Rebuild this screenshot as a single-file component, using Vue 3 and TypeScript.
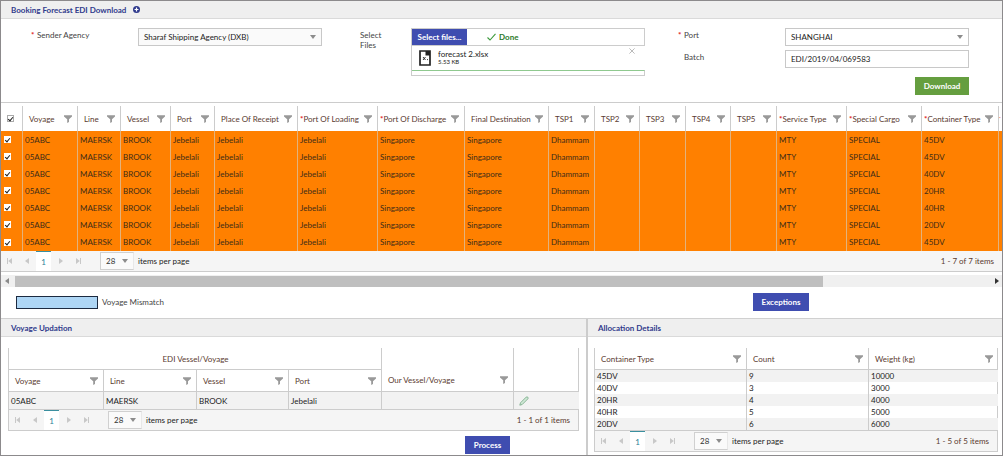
<script setup lang="ts">
import { defineComponent, h, ref } from 'vue'

interface Column {
  title: string
  width: number
  key?: string
  required?: boolean
}

const FilterIcon = defineComponent({
  setup: () => () =>
    h('svg', { viewBox: '0 0 8 8', width: 8, height: 8, 'aria-hidden': 'true' }, [
      h('path', { d: 'M0 0.2H8V1.4L5 4.2V7L3.2 8V4.2L0 1.4Z', fill: '#999' }),
    ]),
})

const Pager = defineComponent({
  props: { total: { type: Number, required: true }, name: { type: String, required: true } },
  setup: (props) => {
    const nav = (label: string, d: string) =>
      h('button', { class: 'nav', type: 'button', 'aria-label': label }, [
        h('svg', { viewBox: '0 0 6 6', width: 6, height: 6 }, [h('path', { d, fill: '#c8c8c8' })]),
      ])
    return () =>
      h('div', { class: 'pager' }, [
        nav('First page', 'M0 0H1V6H0ZM5 0V6L1.2 3Z'),
        nav('Previous page', 'M5 0V6L1 3Z'),
        h('button', { class: 'nav current', type: 'button' }, '1'),
        nav('Next page', 'M1 0V6L5 3Z'),
        nav('Last page', 'M5 0H6V6H5ZM1 0V6L4.8 3Z'),
        h('label', { class: 'size' }, [
          h('span', { class: 'size-box' }, [
            h('select', { name: props.name }, [h('option', '28')]),
            h('svg', { viewBox: '0 0 6 4', width: 6, height: 4 }, [h('path', { d: 'M0 0H6L3 4Z', fill: '#8c8c8c' })]),
          ]),
          'items per page',
        ]),
        h('span', { class: 'count' }, `1 - ${props.total} of ${props.total} items`),
      ])
  },
})

const bookingColumns: Column[] = [
  { title: 'Voyage', width: 55, key: 'voyage' },
  { title: 'Line', width: 43, key: 'line' },
  { title: 'Vessel', width: 50, key: 'vessel' },
  { title: 'Port', width: 44, key: 'port' },
  { title: 'Place Of Receipt', width: 83, key: 'port' },
  { title: 'Port Of Loading', width: 80, key: 'port', required: true },
  { title: 'Port Of Discharge', width: 87, key: 'destination', required: true },
  { title: 'Final Destination', width: 84, key: 'destination' },
  { title: 'TSP1', width: 46, key: 'tsp1' },
  { title: 'TSP2', width: 45 },
  { title: 'TSP3', width: 46 },
  { title: 'TSP4', width: 45 },
  { title: 'TSP5', width: 46 },
  { title: 'Service Type', width: 70, key: 'service', required: true },
  { title: 'Special Cargo', width: 75, key: 'cargo', required: true },
  { title: 'Container Type', width: 77, key: 'container', required: true },
]

const containers = ['45DV', '45DV', '40DV', '20HR', '40HR', '20DV', '45DV']
const bookings = ref(
  containers.map((container) => ({
    selected: true,
    cells: {
      voyage: '05ABC',
      line: 'MAERSK',
      vessel: 'BROOK',
      port: 'Jebelali',
      destination: 'Singapore',
      tsp1: 'Dhammam',
      service: 'MTY',
      cargo: 'SPECIAL',
      container,
    } as Record<string, string>,
  })),
)
const allSelected = ref(true)
const toggleAll = () => bookings.value.forEach((b) => (b.selected = allSelected.value))

const voyageColumns = ['Voyage', 'Line', 'Vessel', 'Port']
const allocations = [
  ['45DV', '9', '10000'],
  ['40DV', '3', '3000'],
  ['20HR', '4', '4000'],
  ['40HR', '5', '5000'],
  ['20DV', '6', '6000'],
]
const batch = ref('EDI/2019/04/069583')
</script>

<template>
  <main class="page">
    <h1 class="bar">
      Booking Forecast EDI Download
      <svg viewBox="0 0 8 8" width="7" height="7" aria-hidden="true">
        <circle cx="4" cy="4" r="4" fill="#2f3a8c" />
        <path d="M4 1.8V6.2M1.8 4H6.2" stroke="#fff" stroke-width="1.4" />
      </svg>
    </h1>

    <form class="form" @submit.prevent>
      <label class="label sender" for="agency"><i class="req">*</i>Sender Agency</label>
      <div class="drop agency">
        <select id="agency"><option>Sharaf Shipping Agency (DXB)</option></select>
        <svg viewBox="0 0 6 4" width="6" height="4"><path d="M0 0H6L3 4Z" fill="#8c8c8c" /></svg>
      </div>

      <span class="label files">Select Files</span>
      <div class="upload">
        <div class="upload-top">
          <button type="button" class="btn pick">Select files...</button>
          <span class="done">
            <svg viewBox="0 0 9 8" width="9" height="8"><path d="M0.5 4.5L3 7L8.5 0.8" fill="none" stroke="#3c9a3c" stroke-width="1.1" /></svg>
            Done
          </span>
        </div>
        <div class="file">
          <svg viewBox="0 0 12 16" width="12" height="16">
            <path d="M1 1H11V15H1Z" fill="#fff" stroke="#222" stroke-width="1.7" />
            <path d="M6.5 1H11V5.5H6.5Z" fill="#222" />
            <path d="M4 7L6.5 10M6.5 7L4 10M8 9.6H9" stroke="#222" stroke-width="0.9" />
          </svg>
          <div class="file-text">
            <span>forecast 2.xlsx</span>
            <small>5.53 KB</small>
          </div>
          <button type="button" class="remove" aria-label="Remove file">
            <svg viewBox="0 0 6 6" width="6" height="6"><path d="M0.4 0.4L5.6 5.6M5.6 0.4L0.4 5.6" stroke="#bbb" /></svg>
          </button>
        </div>
        <div class="progress"></div>
      </div>

      <label class="label port-label" for="port"><i class="req">*</i>Port</label>
      <div class="drop plain port">
        <select id="port"><option>SHANGHAI</option></select>
        <svg viewBox="0 0 6 4" width="6" height="4"><path d="M0 0H6L3 4Z" fill="#8c8c8c" /></svg>
      </div>
      <label class="label batch-label" for="batch">Batch</label>
      <input id="batch" v-model="batch" class="batch" type="text" />
      <button type="button" class="btn green download">Download</button>
    </form>

    <section class="bookings">
      <table class="grid booking">
        <colgroup>
          <col :style="{ width: '21px' }" />
          <col v-for="c in bookingColumns" :key="c.title" :style="{ width: c.width + 'px' }" />
          <col :style="{ width: '4px' }" />
        </colgroup>
        <thead>
          <tr>
            <th class="tick"><input v-model="allSelected" type="checkbox" aria-label="Select all" @change="toggleAll" /></th>
            <th v-for="c in bookingColumns" :key="c.title" :class="{ must: c.required }">
              <div class="head"><span><i v-if="c.required" class="req">*</i>{{ c.title }}</span><FilterIcon /></div>
            </th>
            <th class="edge"><i class="req">*</i></th>
          </tr>
        </thead>
        <tbody>
          <tr v-for="(b, i) in bookings" :key="i">
            <td class="tick"><input v-model="b.selected" type="checkbox" :aria-label="'Select row ' + (i + 1)" /></td>
            <td v-for="c in bookingColumns" :key="c.title">{{ c.key ? b.cells[c.key] : '' }}</td>
            <td></td>
          </tr>
        </tbody>
      </table>
      <Pager :total="7" name="booking-size" />
      <div class="scroll">
        <svg viewBox="0 0 4 6" width="4" height="6"><path d="M4 0V6L0 3Z" fill="#8a8a8a" /></svg>
        <div class="track"><div class="thumb"></div></div>
        <svg viewBox="0 0 4 6" width="4" height="6"><path d="M0 0V6L4 3Z" fill="#333" /></svg>
      </div>
    </section>

    <div class="legend">
      <span class="swatch"></span>
      <span>Voyage Mismatch</span>
      <button type="button" class="btn exceptions">Exceptions</button>
    </div>

    <div class="panels">
      <section class="panel">
        <h2 class="bar">Voyage Updation</h2>
        <div class="panel-body left">
          <div class="frame">
            <table class="grid voyage">
              <colgroup>
                <col v-for="(w, i) in [94, 93, 92, 93, 132, 66]" :key="i" :style="{ width: w + 'px' }" />
              </colgroup>
              <thead>
                <tr>
                  <th colspan="4" class="group">EDI Vessel/Voyage</th>
                  <th rowspan="2" class="low"><div class="head"><span>Our Vessel/Voyage</span><FilterIcon /></div></th>
                  <th rowspan="2"></th>
                </tr>
                <tr>
                  <th v-for="c in voyageColumns" :key="c"><div class="head"><span>{{ c }}</span><FilterIcon /></div></th>
                </tr>
              </thead>
              <tbody>
                <tr>
                  <td>05ABC</td>
                  <td>MAERSK</td>
                  <td>BROOK</td>
                  <td>Jebelali</td>
                  <td></td>
                  <td>
                    <button type="button" class="edit" aria-label="Edit">
                      <svg viewBox="0 0 10 10" width="10" height="10">
                        <path d="M0.8 9.2L1.5 6.8L7.2 1.1Q8 0.5 8.8 1.2Q9.5 2 8.9 2.8L3.2 8.5Z" fill="#cfe8d6" stroke="#7fae8c" stroke-width="0.9" />
                      </svg>
                    </button>
                  </td>
                </tr>
              </tbody>
            </table>
            <Pager :total="1" name="voyage-size" />
          </div>
          <button type="button" class="btn process">Process</button>
        </div>
      </section>

      <section class="panel">
        <h2 class="bar">Allocation Details</h2>
        <div class="panel-body right">
          <div class="frame">
            <table class="grid alloc">
              <colgroup>
                <col v-for="(w, i) in [151, 122, 130]" :key="i" :style="{ width: w + 'px' }" />
              </colgroup>
              <thead>
                <tr>
                  <th v-for="c in ['Container Type', 'Count', 'Weight (kg)']" :key="c">
                    <div class="head"><span>{{ c }}</span><FilterIcon /></div>
                  </th>
                </tr>
              </thead>
              <tbody>
                <tr v-for="a in allocations" :key="a[0]">
                  <td v-for="v in a" :key="v">{{ v }}</td>
                </tr>
              </tbody>
            </table>
            <Pager :total="5" name="allocation-size" />
          </div>
        </div>
      </section>
    </div>
  </main>
</template>

<style>
body {
  margin: 0;
  background: #fff;
}
.pager {
  display: flex;
  align-items: center;
  height: 20px;
  padding-right: 8px;
  background: #f5f5f5;
  border-bottom: 1px solid #ccc;
}
.pager .nav {
  display: flex;
  align-items: center;
  justify-content: center;
  width: 17px;
  height: 12px;
  padding: 0;
  border: 0;
  background: none;
  font: inherit;
}
.pager .nav.current {
  height: 20px;
  width: 15px;
  margin: 0 1px;
  background: #fff;
  border-top: 1px solid #3a8f9f;
  color: #2a7f95;
}
.pager .size {
  display: flex;
  align-items: center;
  gap: 4px;
  margin-left: 14px;
}
.pager .size-box {
  position: relative;
  display: flex;
  align-items: center;
}
.pager select {
  appearance: none;
  width: 34px;
  height: 18px;
  padding: 0 5px;
  border: 1px solid #d0d0d0;
  border-right-color: #e8e8e8;
  border-radius: 0;
  background: #fafafa;
  color: #333;
  font: inherit;
}
.pager .size-box svg {
  position: absolute;
  right: 6px;
  pointer-events: none;
}
.pager .count {
  margin-left: auto;
  color: #5a3a30;
}
.head svg {
  flex: none;
}
</style>

<style scoped>
.page {
  box-sizing: border-box;
  display: flex;
  flex-direction: column;
  min-height: 100vh;
  margin-right: 1px;
  border: 1px solid #8c8a8c;
  overflow: hidden;
  font-family: Lato, "Liberation Sans", sans-serif;
  font-size: 8px;
  line-height: 10px;
  color: #222;
}
.bar {
  display: flex;
  align-items: center;
  gap: 7px;
  height: 17px;
  margin: 0;
  padding: 0 10px;
  background: #efefef;
  border-bottom: 1px solid #dadada;
  color: #2f3a8c;
  font-size: 8px;
  font-weight: 700;
}
.req {
  color: #e02020;
  font-style: normal;
  font-weight: 700;
}
.form {
  display: grid;
  grid-template-columns: 101fr 184fr 38fr 51fr 234fr 39fr 101fr 184fr;
  grid-template-rows: 18px 18px 23px;
  row-gap: 4px;
  padding: 9px 33px 7px 36px;
  border-bottom: 1px solid #ccc;
}
.label {
  grid-row: 1;
  padding-top: 2px;
  color: #444;
}
.label .req {
  float: left;
  width: 6px;
  margin-left: -6px;
}
.sender { grid-column: 1; }
.agency { grid-column: 2; }
.files {
  grid-column: 4;
  grid-row: 1 / 3;
  width: 24px;
}
.port-label { grid-column: 7; }
.batch-label {
  grid-column: 7;
  grid-row: 2;
}
.port { grid-column: 8; }
.drop {
  position: relative;
  grid-row: 1;
  display: flex;
  align-items: center;
}
.drop select,
.batch {
  box-sizing: border-box;
  appearance: none;
  width: 100%;
  height: 18px;
  margin: 0;
  padding: 0 5px;
  border: 1px solid #c8c8c8;
  border-radius: 0;
  background: #fafafa;
  color: #222;
  font: inherit;
}
.drop.plain select,
.batch {
  background: #fff;
}
.drop svg {
  position: absolute;
  right: 6px;
  pointer-events: none;
}
.batch {
  grid-column: 8;
  grid-row: 2;
}
.btn {
  height: 18px;
  padding: 0;
  border: 0;
  background: #3f4db0;
  color: #fff;
  font: inherit;
  font-weight: 700;
}
.green { background: #659e3f; }
.download {
  grid-column: 8;
  grid-row: 3;
  align-self: end;
  justify-self: end;
  width: 54px;
}
.upload {
  grid-column: 5;
  grid-row: 1 / 4;
  align-self: start;
  border: 1px solid #ccc;
  box-sizing: border-box;
  border-right: 0;
}
.upload-top {
  display: flex;
  align-items: center;
  height: 16px;
  border-right: 1px solid #ccc;
  border-bottom: 1px solid #ccc;
}
.upload .pick {
  width: 55px;
  height: 16px;
}
.done {
  display: flex;
  align-items: center;
  gap: 3px;
  margin-left: 20px;
  color: #2a7a2a;
  font-weight: 700;
}
.file {
  display: flex;
  align-items: center;
  gap: 7px;
  height: 24px;
  padding: 0 10px 0 7px;
}
.file-text {
  display: flex;
  flex-direction: column;
  flex: 1;
  line-height: 8px;
}
.file-text small { font-size: 6px; }
.remove {
  align-self: flex-start;
  display: flex;
  margin-top: 2px;
  padding: 0;
  border: 0;
  background: none;
}
.progress {
  height: 4px;
  border-top: 1px solid #8fc98f;
  border-right: 1px solid #ccc;
}
.grid {
  width: 100%;
  table-layout: fixed;
  border-collapse: separate;
  border-spacing: 0;
}
.grid th,
.grid td {
  box-sizing: border-box;
  padding: 0 0 0 2px;
  border-left: 1px solid #ccc;
  text-align: left;
  font-weight: 400;
  white-space: nowrap;
}
.grid th {
  padding: 0 5px 0 6px;
  color: #5a3a30;
}
.head {
  display: flex;
  align-items: center;
  justify-content: space-between;
}
.bookings { padding-top: 3px; }
.booking th {
  height: 25px;
}
.booking th.must { padding-left: 2px; }
.booking th.edge {
  padding: 0;
  font-size: 4px;
}
.booking tbody tr { background: #ff8000; }
.booking td {
  height: 17px;
  border-left-color: #e3b27c;
  color: #402c18;
}
.booking tbody tr:last-child td { height: 18px; }
.booking .tick {
  border-left: 0;
  padding: 0 0 0 3px;
}
.booking th.tick { padding-left: 6px; }
.booking input {
  appearance: none;
  display: grid;
  place-items: center;
  width: 7px;
  height: 7px;
  margin: 0;
  border: 1px solid #aaa;
  background: #fff;
}
.booking td input { border-color: #fff; }
.booking input:checked::after {
  content: "";
  width: 2px;
  height: 4px;
  border: solid #222;
  border-width: 0 1px 1px 0;
  transform: rotate(40deg);
}
.scroll {
  display: flex;
  align-items: center;
  gap: 6px;
  height: 12px;
  margin-top: 3px;
  padding: 0 3px 0 4px;
  background: #f0f0f0;
}
.track { flex: 1; }
.thumb {
  width: 83%;
  height: 11px;
  background: #bfbfbf;
}
.legend {
  display: flex;
  align-items: center;
  gap: 4px;
  padding: 6px 193px 7px 15px;
  border-bottom: 1px solid #d0d0d0;
  color: #444;
}
.swatch {
  box-sizing: border-box;
  width: 82px;
  height: 13px;
  border: 1px solid #1c2a40;
  background: #aed6f5;
}
.exceptions {
  width: 56px;
  margin-left: auto;
}
.panels {
  flex: 1;
  display: grid;
  grid-template-columns: minmax(0, 585fr) minmax(0, 416fr);
}
.panel + .panel { border-left: 2px solid #ccc; }
.panel-body {
  display: flex;
  flex-direction: column;
  padding-top: 11px;
}
.left { padding-left: 7px; padding-right: 7px; }
.right { padding-left: 6px; padding-right: 4px; }
.frame { border-right: 1px solid #ccc; border-left: 1px solid #ccc; }
.frame th:first-child,
.frame td:first-child { border-left: 0; }
.frame thead tr:first-child th ~ th { border-left: 1px solid #ccc; }
.frame th {
  height: 22px;
  border-bottom: 1px solid #ccc;
}
.frame th.group { text-align: center; }
.frame th.low {
  vertical-align: bottom;
  padding-bottom: 6px;
}
.voyage td {
  height: 18px;
  background: #f2f2f2;
  border-bottom: 1px solid #ccc;
}
.alloc td {
  height: 12px;
}
.alloc tbody tr:nth-child(odd) { background: #f2f2f2; }
.alloc tbody tr:last-child td {
  height: 13px;
  border-bottom: 1px solid #ccc;
}
.edit {
  display: flex;
  margin-left: 3px;
  padding: 0;
  border: 0;
  background: none;
}
.process {
  align-self: flex-end;
  width: 45px;
  margin: 5px 69px 0 0;
}
</style>
